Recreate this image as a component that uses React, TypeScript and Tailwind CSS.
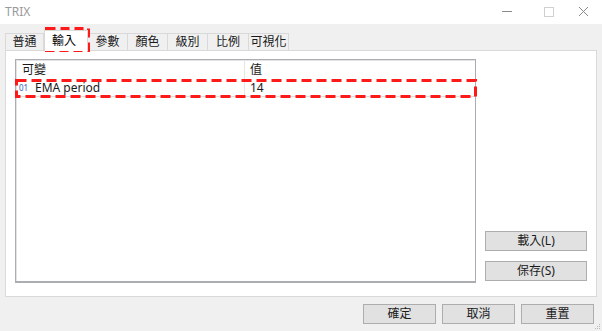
const tabs = [
    { label: "普通", w: "w-[39px]" },
    { label: "輸入", w: "w-[44px]", active: true },
    { label: "參數", w: "w-[40px]" },
    { label: "顏色", w: "w-[40px]" },
    { label: "級別", w: "w-[40px]" },
    { label: "比例", w: "w-[41px]" },
    { label: "可視化", w: "w-[40px]" },
];

function WinButton({ label, className = "" }: { label: string; className?: string }) {
    return (
        <div className={`h-[20px] bg-[#e1e1e1] border border-[#adadad] flex items-center justify-center text-[12px] text-[#1a1a1a] ${className}`}>
            {label}
        </div>
    );
}

function Dashed({ x, y, w, h, dash }: { x: number; y: number; w: number; h: number; dash: string }) {
    return (
        <svg className="absolute pointer-events-none" style={{ left: x, top: y }} width={w} height={h}>
            <rect x="1.5" y="1.5" width={w - 3} height={h - 3} fill="none" stroke="#ff1a1a" strokeWidth="3" strokeDasharray={dash} />
        </svg>
    );
}

export default function App() {
    return (
        <div className="relative w-[602px] h-[331px] bg-[#f0f0f0] overflow-hidden" style={{ fontFamily: '"Noto Sans", "Noto Sans CJK TC", sans-serif' }}>
            {/* title bar */}
            <div className="h-[24px] bg-white flex items-center justify-between">
                <span className="pl-[5px] text-[12px] text-[#9a9a9a]">TRIX</span>
                <div className="flex items-center h-full">
                    <svg width="46" height="24" viewBox="0 0 46 24">
                        <line x1="18" y1="11.5" x2="28" y2="11.5" stroke="#8a8a8a" strokeWidth="1" />
                    </svg>
                    <svg width="38" height="24" viewBox="0 0 38 24">
                        <rect x="14.5" y="7.5" width="9" height="9" fill="none" stroke="#d0d0d0" strokeWidth="1" />
                    </svg>
                    <svg width="34" height="24" viewBox="0 0 34 24">
                        <path d="M11 7 L20 16 M20 7 L11 16" stroke="#8a8a8a" strokeWidth="1" />
                    </svg>
                </div>
            </div>

            {/* tab strip */}
            <div className="flex items-end h-[26px] pl-[5px]">
                {tabs.map((t) =>
                    t.active ? (
                        <div key={t.label} className={`${t.w} h-[21px] -mb-px relative z-10 bg-white border border-b-0 border-[#d9d9d9] flex items-center pl-[7px] text-[12px] text-black`}>
                            {t.label}
                        </div>
                    ) : (
                        <div key={t.label} className={`${t.w} h-[17px] bg-[#f0f0f0] border border-b-0 border-l-0 first:border-l border-[#d9d9d9] flex items-center justify-center text-[12px] text-[#1a1a1a]`}>
                            {t.label}
                        </div>
                    )
                )}
            </div>

            {/* tab panel */}
            <div className="mx-[5px] h-[247px] bg-white border border-[#d9d9d9] flex pl-[9px] pt-[8px]">
                <div className="w-[461px] h-[224px] border border-[#abadb3] border-b-2 shadow-[inset_1px_1px_0_#e3e3e3] flex flex-col text-[12px]">
                    <div className="flex h-[20px] shrink-0">
                        <div className="w-[229px] border-r border-[#e5e5e5] flex items-center pl-[6px] text-[#1a1a1a]">可變</div>
                        <div className="flex-1 flex items-center pl-[5px] text-[#1a1a1a]">值</div>
                    </div>
                    <div className="flex h-[17px] shrink-0 border-b border-[#dcdcdc]">
                        <div className="w-[229px] border-r border-[#e5e5e5] flex items-center pl-[3px]">
                            <span className="text-[8px] text-[#3060c0] w-[16px]">01</span>
                            <span className="text-[#1a1a1a]">EMA period</span>
                        </div>
                        <div className="flex-1 flex items-center pl-[5px] text-[#1a1a1a]">14</div>
                    </div>
                </div>
                <div className="ml-[9px] w-[102px] h-[224px] flex flex-col justify-end gap-[10px] pb-[2px]">
                    <WinButton label="載入(L)" className="w-[102px]" />
                    <WinButton label="保存(S)" className="w-[102px]" />
                </div>
            </div>

            {/* bottom buttons */}
            <div className="flex justify-end gap-[6px] pr-[8px] mt-[7px]">
                <WinButton label="確定" className="w-[73px]" />
                <WinButton label="取消" className="w-[73px]" />
                <WinButton label="重置" className="w-[73px]" />
            </div>

            {/* resize grip */}
            <svg className="absolute right-[1px] bottom-[1px]" width="8" height="8" viewBox="0 0 8 8">
                <rect x="6" y="2" width="1" height="1" fill="#b8b8b8" />
                <rect x="4" y="4" width="1" height="1" fill="#b8b8b8" />
                <rect x="6" y="4" width="1" height="1" fill="#b8b8b8" />
                <rect x="2" y="6" width="1" height="1" fill="#b8b8b8" />
                <rect x="4" y="6" width="1" height="1" fill="#b8b8b8" />
                <rect x="6" y="6" width="1" height="1" fill="#b8b8b8" />
            </svg>

            {/* annotations */}
            <Dashed x={45} y={27} w={45} h={25} dash="9 5" />
            <Dashed x={15} y={79} w={462} h={19} dash="10 5" />
        </div>
    );
}
